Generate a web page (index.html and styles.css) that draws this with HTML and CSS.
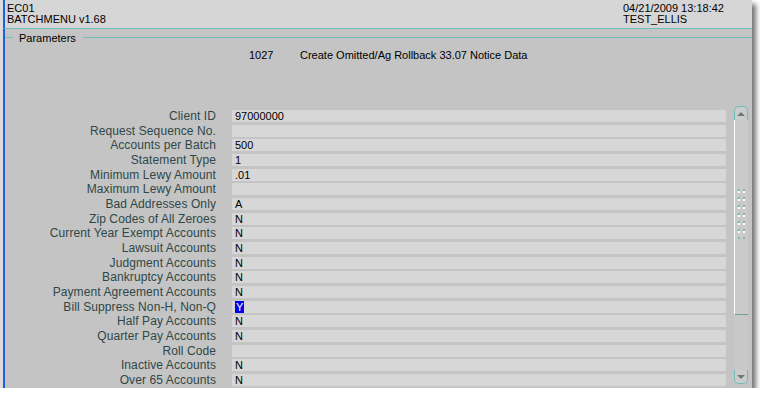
FILE: index.html
```html
<!DOCTYPE html>
<html lang="en">

<head>
    <meta charset="UTF-8">
    <title>BATCHMENU</title>
    <link rel="stylesheet" href="styles.css">
</head>

<body>

    <div class="window">
        <!-- Header -->
        <div class="header">
            <div class="header-left">
                <div>EC01</div>
                <div>BATCHMENU v1.68</div>
            </div>
            <div class="header-right">
                <div>04/21/2009 13:18:42</div>
                <div>TEST_ELLIS</div>
            </div>
        </div>

        <div class="content">
            <div class="group-title"><span>Parameters</span></div>

            <div class="job">
                <span class="job-no">1027</span>
                <span class="job-name">Create Omitted/Ag Rollback 33.07 Notice Data</span>
            </div>

            <div class="form-area">
                <div class="form" id="paramForm"></div>

                <!-- Scrollbar -->
                <div class="scrollbar">
                    <div class="sb-btn sb-up"><span class="arrow-up"></span></div>
                    <div class="sb-track">
                        <div class="sb-thumb">
                            <div class="grip"></div>
                        </div>
                    </div>
                    <div class="sb-btn sb-down"><span class="arrow-down"></span></div>
                </div>
            </div>
        </div>
    </div>

    <script>
        const params = [
            ["Client ID", "97000000"],
            ["Request Sequence No.", ""],
            ["Accounts per Batch", "500"],
            ["Statement Type", "1"],
            ["Minimum Lewy Amount", ".01"],
            ["Maximum Lewy Amount", ""],
            ["Bad Addresses Only", "A"],
            ["Zip Codes of All Zeroes", "N"],
            ["Current Year Exempt Accounts", "N"],
            ["Lawsuit Accounts", "N"],
            ["Judgment Accounts", "N"],
            ["Bankruptcy Accounts", "N"],
            ["Payment Agreement Accounts", "N"],
            ["Bill Suppress Non-H, Non-Q", "Y"],
            ["Half Pay Accounts", "N"],
            ["Quarter Pay Accounts", "N"],
            ["Roll Code", ""],
            ["Inactive Accounts", "N"],
            ["Over 65 Accounts", "N"]
        ];

        const form = document.getElementById("paramForm");

        params.forEach(([label, value]) => {
            const lbl = document.createElement("div");
            lbl.className = "label";
            lbl.textContent = label;
            form.appendChild(lbl);

            const field = document.createElement("div");
            field.className = "field";
            if (label === "Bill Suppress Non-H, Non-Q") {
                field.innerHTML = `<span class="selected">${value}</span>`;
            } else {
                field.textContent = value;
            }
            form.appendChild(field);
        });
    </script>

</body>

</html>
```

FILE: styles.css
```css
body {
    margin: 0;
    padding: 0;
    background: #ffffff;
    font-family: 'Liberation Sans', Arial, sans-serif;
    font-size: 11px;
    color: #000;
}

.window {
    width: 749px;
    height: 388px;
    border-left: 3px solid #dcdcdc;
    display: flex;
    flex-direction: column;
    box-shadow: 4px 4px 5px rgba(0, 0, 0, 0.55);
    overflow: hidden;
}

.header {
    height: 29px;
    background: #d6d6d6;
    border-left: 2px solid #1f5fe0;
    border-bottom: 1px solid #6fbdb6;
    display: flex;
    justify-content: space-between;
    line-height: 11px;
    padding: 3px 0 0 2px;
    box-sizing: border-box;
}

.header-right {
    width: 129px;
}

.content {
    flex: 1;
    background: #c4c4c4;
    border-left: 2px solid #1f5fe0;
    display: flex;
    flex-direction: column;
}

/* Group box title */
.group-title {
    display: flex;
    align-items: center;
    height: 11px;
    margin-top: 3px;
    color: #000;
}

.group-title::before {
    content: "";
    width: 8px;
    height: 1px;
    background: #6fbdb6;
    margin-right: 6px;
}

.group-title::after {
    content: "";
    flex: 1;
    height: 1px;
    background: #6fbdb6;
    margin-left: 7px;
}

.job {
    display: flex;
    padding: 6px 0 0 244px;
    height: 11px;
}

.job-no {
    width: 51px;
}

/* Parameters */
.form-area {
    display: flex;
    margin-top: 46px;
}

.form {
    display: grid;
    grid-template-columns: 211px 494px;
    column-gap: 16px;
    row-gap: 2.67px;
    grid-auto-rows: 12px;
    margin-top: 4px;
}

.label {
    text-align: right;
    color: #2f4747;
    font-size: 12px;
    line-height: 12px;
    letter-spacing: 0.1px;
    white-space: nowrap;
}

.field {
    background: #d7d7d7;
    font-size: 11px;
    line-height: 12px;
    padding-left: 3px;
}

.selected {
    background: #0000ee;
    color: #fff;
    padding: 0 1px;
}

/* Scrollbar */
.scrollbar {
    width: 14px;
    margin-left: 8px;
    display: flex;
    flex-direction: column;
    height: 278px;
}

.sb-btn {
    height: 14px;
    box-sizing: border-box;
    border: 1px solid #6fbdb6;
    background: #cccccc;
    display: flex;
    align-items: center;
    justify-content: center;
}

.sb-up {
    border-bottom: none;
    border-radius: 5px 5px 0 0;
}

.sb-down {
    border-top: none;
    border-radius: 0 0 5px 5px;
}

.arrow-up {
    width: 0;
    height: 0;
    border-left: 4px solid transparent;
    border-right: 4px solid transparent;
    border-bottom: 4px solid #6a7a7a;
}

.arrow-down {
    width: 0;
    height: 0;
    border-left: 4px solid transparent;
    border-right: 4px solid transparent;
    border-top: 4px solid #6a7a7a;
}

.sb-track {
    flex: 1;
    background: #c8c8c8;
}

.sb-thumb {
    height: 195px;
    box-sizing: border-box;
    border-left: 1px solid #ffffff;
    border-bottom: 1px solid #6f9f9a;
    background: #cacaca;
    display: flex;
    align-items: center;
    justify-content: center;
}

.grip {
    width: 8px;
    height: 50px;
    margin-top: -6px;
    background-image:
        radial-gradient(circle at 1px 1px, #ffffff 1px, transparent 1.2px),
        radial-gradient(circle at 1px 1px, #6fbdb6 1px, transparent 1.2px);
    background-size: 5px 8px, 5px 8px;
    background-position: 0 2px, 5px 0;
}
```
